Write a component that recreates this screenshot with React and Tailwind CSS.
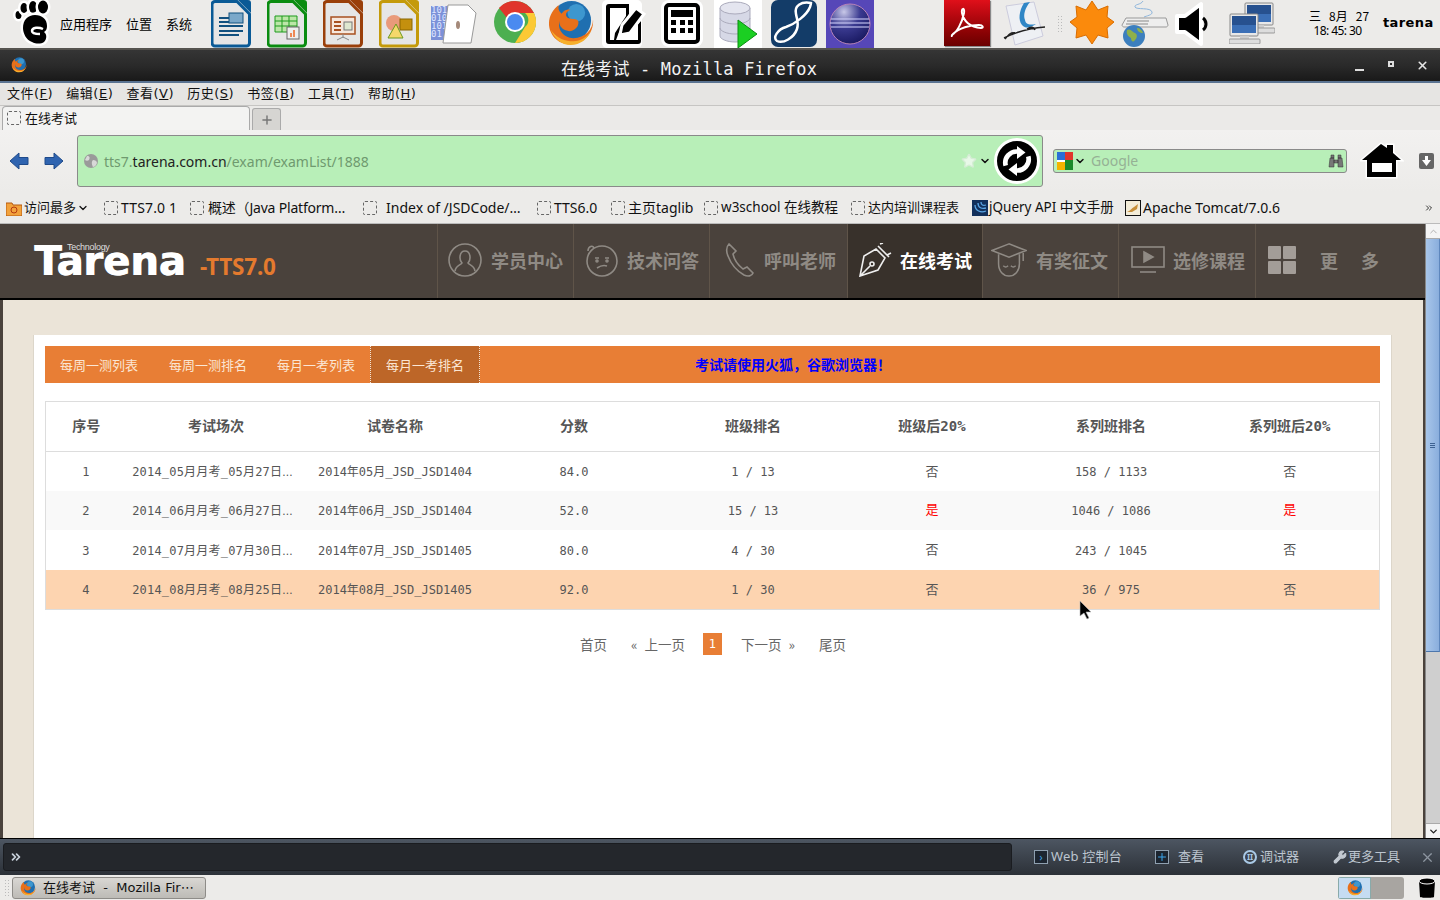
import React from "react";
import { Star, ChevronDown, ChevronsRight, Plus, X, Wrench } from "lucide-react";

const Foot = () => (
  <svg width="38" height="46" viewBox="0 0 38 46" className="ml-[13px] shrink-0">
    <g stroke="#fff" strokeWidth="5" paintOrder="stroke">
      <ellipse cx="5.5" cy="15" rx="3" ry="4" fill="#000" />
      <ellipse cx="11" cy="8" rx="3.5" ry="5" fill="#000" />
      <ellipse cx="20" cy="7" rx="4" ry="6" fill="#000" />
      <ellipse cx="30" cy="7" rx="5" ry="6.5" fill="#000" />
      <path d="M22 15c7 0 12 4 12 11 0 3-1 5-3 6 3 2 3 7 0 10-3 2-8 2-12 0-6-2-9-9-9-14 0-8 5-13 12-13z" fill="#000" />
    </g>
    <path d="M30 29c-4-2-11-2-11 2 0 3 5 3 8 3" stroke="#fff" strokeWidth="2.5" fill="none" />
  </svg>
);

const DocIcon = ({ c, children, ml }) => (
  <svg width="40" height="48" viewBox="0 0 40 48" className={`shrink-0 ${ml}`}>
    <path d="M27 0h10a3 3 0 0 1 3 3v10z" fill={c} />
    <path d="M4 1.5h22L38.5 14v29a3 3 0 0 1-3 3H4a3 3 0 0 1-3-3V4.500a3 3 0 0 1 3-3z" fill="#e6e6e6" stroke={c} strokeWidth="3" />
    {children}
  </svg>
);

const FirefoxIcon = ({ s = 47, className = "" }) => (
  <svg width={s} height={s} viewBox="0 0 48 48" className={`shrink-0 ${className}`}>
    <circle cx="25" cy="21" r="20" fill="#1f6fb0" />
    <circle cx="30" cy="13" r="9" fill="#3d97cf" />
    <path d="M12 5c-1 5 1 7 3 9 4-6 9-4 9-4-7 3-5 8-1 9 5 1 8 0 9 3 1 6-6 12-13 9-5-2-7-6-6-10-3 9 4 18 14 18 12 0 20-9 20-19 1 11-6 23-20 25C12 47 2 36 2 24 2 15 7 9 12 5z" fill="#e8701a" />
    <path d="M4 30c3 9 11 16 20 16 10 0 18-6 21-15-4 8-12 12-21 11C15 41 8 37 4 30z" fill="#f7b02c" />
  </svg>
);

const Chrome = () => (
  <svg width="42" height="44" viewBox="0 0 42 42" className="ml-[15px] shrink-0">
    <circle cx="21" cy="21" r="21" fill="#4caf50" />
    <path d="M21 0a21 21 0 0 1 19 12H21a9 9 0 0 0-8 5L5 7A21 21 0 0 1 21 0z" fill="#e0352b" />
    <path d="M40 12a21 21 0 0 1-19 30l10-16a9 9 0 0 0 0-14z" fill="#fcc934" />
    <circle cx="21" cy="21" r="10" fill="#fff" />
    <circle cx="21" cy="21" r="8" fill="#4a8af0" />
  </svg>
);

const Binary = () => (
  <div className="relative w-[48px] h-[48px] ml-[12px] shrink-0">
    <div className="absolute left-0 top-[6px] w-[22px] h-[34px] bg-[#7c91d8] text-[#dfe6ff] text-[9px] leading-[8px] font-['DejaVu_Sans_Mono',monospace] overflow-hidden">101<br />010<br />101<br />01</div>
    <svg width="36" height="40" viewBox="0 0 36 40" className="absolute left-[11px] top-[4px]">
      <path d="M6 1h20l8 8-5 30H1z" fill="#fff" stroke="#999" />
      <ellipse cx="16" cy="21" rx="2" ry="4" fill="#a58a7a" />
    </svg>
  </div>
);

const EditIcon = () => (
  <svg width="48" height="48" viewBox="0 0 48 48" className="ml-[8px] shrink-0">
    <rect x="0" y="0" width="40" height="48" rx="5" fill="#fff" />
    <path d="M7 4h20v10L17 32l-3 8h22V24l3-3v20a3 3 0 0 1-3 3H7a3 3 0 0 1-3-3V7a3 3 0 0 1 3-3z" fill="#000" />
    <path d="M8 8h16v8L13 33l-1 7H8z" fill="#fff" />
    <path d="M34 8l8 6-14 19-10 2 2-10z" fill="#000" stroke="#fff" strokeWidth="3" />
  </svg>
);

const Calc = () => (
  <div className="ml-[11px] w-[42px] h-[47px] bg-white rounded-[8px] shrink-0 flex items-center justify-center">
    <div className="w-[36px] h-[41px] border-[4px] border-black rounded-[5px] bg-white p-[3px] flex flex-col gap-[3px]">
      <div className="h-[7px] bg-black" />
      <div className="grid grid-cols-3 gap-x-[4px] gap-y-[3px]">
        {[...Array(6)].map((_, i) => <div key={i} className="h-[5px] w-[5px] bg-black" />)}
      </div>
    </div>
  </div>
);

const DbIcon = () => (
  <svg width="48" height="48" viewBox="0 0 48 48" className="ml-[11px] shrink-0 bg-white">
    <path d="M6 8v28c0 3 7 6 15 6s15-3 15-6V8z" fill="#d6d8e6" stroke="#aab" />
    <ellipse cx="21" cy="8" rx="15" ry="6" fill="#e4e5ef" stroke="#aab" />
    <path d="M6 18c0 3 7 6 15 6s15-3 15-6M6 28c0 3 7 6 15 6s15-3 15-6" fill="none" stroke="#aab" />
    <path d="M24 20l19 14-19 14z" fill="#1bcf22" stroke="#0a8f10" />
  </svg>
);

const Solaris = () => (
  <div className="ml-[9px] w-[46px] h-[47px] rounded-[7px] bg-[#133c68] shrink-0 overflow-hidden">
    <svg width="46" height="47" viewBox="0 0 46 47">
      <path d="M40 3C30 1 23 6 25 14c1 6 3 9 1 15-3 9-14 15-20 12-5-3 1-12 9-14 9-3 21-12 24-20 1-3 1-4 1-4z" fill="none" stroke="#fff" strokeWidth="2.5" />
    </svg>
  </div>
);

const Eclipse = () => (
  <div className="ml-[9px] w-[48px] h-[48px] bg-[#5647b8] shrink-0 flex items-center justify-center">
    <svg width="42" height="42" viewBox="0 0 42 42">
      <defs>
        <radialGradient id="ecl" cx="0.35" cy="0.2" r="0.9">
          <stop offset="0" stopColor="#c8c8e8" />
          <stop offset="0.45" stopColor="#3a3a90" />
          <stop offset="1" stopColor="#14145a" />
        </radialGradient>
      </defs>
      <circle cx="21" cy="21" r="20" fill="url(#ecl)" stroke="#b884b8" />
      <path d="M2 16h38M1 20h40M2 24h38" stroke="#d8d8ff" strokeWidth="1" />
    </svg>
  </div>
);

const Pdf = () => (
  <div className="ml-[70px] w-[46px] h-[46px] bg-gradient-to-b from-[#e0101a] to-[#6a0000] shadow-[1px_1px_1px_#888] shrink-0 flex items-center justify-center">
    <svg width="36" height="36" viewBox="0 0 36 36">
      <path d="M3 30c5-3 10-12 12-22 1-6-3-5-2 0 2 9 8 14 19 15 3 0 2-3-2-3-9 0-20 3-26 9-2 2-1 3-1 1z" fill="none" stroke="#fff" strokeWidth="2" />
    </svg>
  </div>
);

const Glasses = () => (
  <svg width="45" height="48" viewBox="0 0 45 48" className="ml-[12px] shrink-0">
    <path d="M4 6l28-4 9 34-28 9z" fill="#eef0f4" stroke="#ccd" />
    <path d="M22 3c-5 8-6 17-2 22 4 4 8 3 14-1-6 1-10 1-11-4-2-5 0-12 5-18z" fill="#2f86c6" />
    <path d="M2 38c12-6 26-10 41-11M3 39c4-5 6-7 10-6M25 29c4-3 7-2 8 1" stroke="#222" strokeWidth="1.5" fill="none" />
  </svg>
);

const Sun = () => (
  <svg width="44" height="44" viewBox="0 0 44 44" className="ml-[8px] shrink-0">
    <path d="M22 1l6 9 10-4-1 11 7 5-7 6 1 10-10-3-6 9-6-9-10 3 1-10-7-6 7-5-1-11 10 4z" fill="#fb8a0c" stroke="#d96d00" />
  </svg>
);

const Keyboard = () => (
  <svg width="48" height="48" viewBox="0 0 48 48" className="ml-[7px] shrink-0">
    <path d="M22 1c-2 4-9 3-8 6 1 3 16 0 17 5 1 3-6 4-8 5" fill="none" stroke="#8fb6dc" />
    <path d="M5 18h40l2 7c0 1-1 2-2 2H3c-1 0-2-1-2-2z" fill="#eee" stroke="#999" />
    <path d="M6 21h22M5 24h22" stroke="#bbb" strokeWidth="2" />
    <circle cx="13" cy="36" r="11" fill="#3c7fbe" />
    <path d="M6 30c4-2 5 2 8 3 2 1 3 4 0 7-2 3-4 1-4-2-3-2-5-4-4-8zM16 28c3 0 5 2 6 5-3 0-6-2-6-5z" fill="#8eb04a" />
  </svg>
);

const Speaker = () => (
  <svg width="34" height="48" viewBox="0 0 34 48" className="ml-[6px] shrink-0">
    <path d="M2 16h8L26 4v40L10 32H2z" fill="#000" stroke="#fff" strokeWidth="4" strokeLinejoin="round" />
    <path d="M28 18c4 3 4 9 0 12" fill="none" stroke="#000" strokeWidth="3" />
  </svg>
);

const Monitor = ({ x, y }) => (
  <g transform={`translate(${x},${y})`}>
    <rect x="1" y="1" width="28" height="22" rx="1" fill="#e8e8e8" stroke="#888" />
    <rect x="3" y="3" width="24" height="17" fill="#27518f" />
    <path d="M3 12h24v8H3z" fill="#3b6fb6" />
    <rect x="11" y="23" width="9" height="3" fill="#ccc" />
    <rect x="0" y="26" width="31" height="5" rx="1" fill="#ddd" stroke="#999" />
  </g>
);

const Network = () => (
  <svg width="46" height="44" viewBox="0 0 46 44" className="ml-[20px] shrink-0">
    <Monitor x={15} y={2} />
    <Monitor x={0} y={13} />
  </svg>
);

const Panel = () => (
  <div className="h-[48px] bg-[#ecebe9] flex items-start font-['Noto_Sans_CJK_SC',sans-serif] text-[13px] text-black">
    <Foot />
    <div className="w-[148px] shrink-0 flex items-center h-[48px] gap-[14px] pl-[9px]">
      <span>应用程序</span><span>位置</span><span>系统</span>
    </div>
    <DocIcon c="#0a5a96" ml="ml-[12px]">
      <path d="M8 18h12M8 22h10M8 26h24M8 31h24M8 35h20" stroke="#11507f" strokeWidth="2" />
      <rect x="18" y="13" width="14" height="10" fill="#7ba8c9" stroke="#11507f" />
    </DocIcon>
    <DocIcon c="#0a8c10" ml="ml-[16px]">
      <path d="M8 16h22v16H8zM8 21h22M8 26h22M15 16v16M22 16v16" fill="#bce6a8" stroke="#1c9b1c" />
      <rect x="20" y="27" width="12" height="12" fill="#eee" stroke="#666" />
      <path d="M23 37v-4h2v4zM26 37v-7h2v7z" fill="#e85" />
    </DocIcon>
    <DocIcon c="#9a3f0a" ml="ml-[16px]">
      <rect x="8" y="17" width="24" height="17" fill="#f6e7dc" stroke="#a85020" strokeWidth="1.5" />
      <path d="M11 22h7M11 26h7M11 30h7" stroke="#a85020" strokeWidth="2" />
      <rect x="21" y="22" width="8" height="8" fill="#dfe8d0" stroke="#777" />
      <path d="M20 34v4M14 40l6-3 6 3" stroke="#888" fill="none" />
    </DocIcon>
    <DocIcon c="#c49a0a" ml="ml-[16px]">
      <circle cx="15" cy="23" r="8" fill="#e99a7a" />
      <rect x="21" y="19" width="12" height="11" fill="#c4900e" stroke="#8a6600" />
      <path d="M17 24l-8 14h15z" fill="#f5d86a" stroke="#6a9a20" />
    </DocIcon>
    <Binary />
    <Chrome />
    <FirefoxIcon className="ml-[11px]" />
    <EditIcon />
    <Calc />
    <DbIcon />
    <Solaris />
    <Eclipse />
    <Pdf />
    <Glasses />
    <div className="ml-[10px] mt-[15px] w-[5px] h-[18px] shrink-0 bg-[radial-gradient(#bbb_1px,transparent_1px)] bg-[length:3px_3px]" />
    <Sun />
    <Keyboard />
    <Speaker />
    <Network />
    <div className="ml-[34px] w-[57px] shrink-0 pt-[7px] text-[12px] text-center whitespace-pre flex flex-col">
      <div className="h-[18px] leading-[18px]">{"三   8月   27"}</div>
      <div className="-mt-[1px] h-[14px] leading-[14px] font-['Noto_Sans',sans-serif] tracking-[-0.6px]">{"18: 45: 30"}</div>
    </div>
    <div className="ml-[17px] pt-[14px] text-[13px] leading-[18px] font-bold font-['DejaVu_Sans',sans-serif] tracking-[0.4px]">tarena</div>
  </div>
);

const TitleBar = () => (
  <div className="relative h-[35px] bg-gradient-to-b from-[#353535] via-[#2a2a2a] to-[#191919] border-t-2 border-[#55534f] border-b-2 border-b-[#5a7391] flex items-center justify-center text-[#f2f2f2] text-[17px] font-['DejaVu_Sans_Mono','Noto_Sans_CJK_SC',monospace]">
    <FirefoxIcon s={16} className="absolute left-[11px] top-[7px]" />
    <span className="-ml-[62px] mt-[9px] tracking-[0.18px]">在线考试 - Mozilla Firefox</span>
    <div className="absolute left-[1355px] top-[19px] w-[9px] h-[2px] bg-[#ddd]" />
    <div className="absolute left-[1388px] top-[11px] w-[6px] h-[6px] border-2 border-[#ddd]" />
    <X size={13} strokeWidth={3} color="#e5e5e5" className="absolute left-[1416px] top-[9px]" />
  </div>
);

const menus = [["文件", "F"], ["编辑", "E"], ["查看", "V"], ["历史", "S"], ["书签", "B"], ["工具", "T"], ["帮助", "H"]];
const MenuBar = () => (
  <div className="h-[22px] bg-[#e6e5e3] flex items-center gap-[13.200px] pl-[7px] text-[13px] tracking-[0.5px] text-[#111] font-['DejaVu_Sans','Noto_Sans_CJK_SC',sans-serif]">
    {menus.map(([a, b]) => (
      <span key={a} className="whitespace-nowrap">{a}(<span className="underline">{b}</span>)</span>
    ))}
  </div>
);

const Ph = ({ className = "" }) => (
  <span className={`inline-block shrink-0 w-[14px] h-[14px] rounded-[2px] border border-dashed border-[#666] ${className}`} />
);

const TabBar = () => (
  <div className="h-[25px] bg-[#ebeae8] border-t border-[#c6c5c3] flex items-end pl-[2px] font-['Noto_Sans_CJK_SC',sans-serif] text-[13px] text-[#111]">
    <div className="w-[248px] h-[24px] bg-[#f3f3f2] border border-b-0 border-[#aaa] rounded-t-[4px] flex items-center pl-[4px] pb-[2px] gap-[4px]">
      <Ph /><span>在线考试</span>
    </div>
    <div className="ml-[2px] w-[29px] h-[22px] bg-[#d6d5d2] border border-b-0 border-[#aaa] rounded-t-[3px] flex items-center justify-center">
      <Plus size={14} strokeWidth={2.5} color="#777" />
    </div>
  </div>
);

const Arrow = ({ dir }) => (
  <svg width="20" height="20" viewBox="0 0 20 20" className={dir === "l" ? "ml-[9px] shrink-0" : "ml-[15px] shrink-0"}>
    <path d={dir === "l" ? "M1 10l9-8v4.500h9v7h-9V18z" : "M19 10l-9-8v4.500H1v7h9V18z"} fill="#2f64b0" stroke="#1f4a8a" />
  </svg>
);

const NavBar = () => (
  <div className="h-[62px] bg-gradient-to-b from-[#f2f1f0] to-[#ecebe9] flex items-center text-[14px] font-['Noto_Sans',sans-serif]">
    <Arrow dir="l" />
    <Arrow dir="r" />
    <div className="ml-[13px] w-[966px] h-[52px] bg-[#b8efb8] border border-[#8a8a8a] rounded-[3px] flex items-center pl-[6px] relative">
      <svg width="14" height="14" viewBox="0 0 14 14" className="shrink-0">
        <circle cx="7" cy="7" r="7" fill="#9a9a9a" />
        <path d="M3 2c3 0 3 2 2 4-1 1-3 1-4 0zM9 6c2 0 4 1 4 3-1 3-3 4-4 4-1-2-2-5 0-7z" fill="#d8d8d8" />
      </svg>
      <span className="ml-[6px] text-[#6f9a6f]">tts7.<span className="text-[#222]">tarena.com.cn</span>/exam/examList/1888</span>
      <Star size={16} fill="#e8f8e8" color="#d5edd5" className="absolute left-[883px] top-[17px]" />
      <ChevronDown size={12} strokeWidth={3} color="#111" className="absolute left-[901px] top-[19px]" />
      <div className="absolute left-[916px] top-[2px] w-[46px] h-[46px] rounded-full bg-black border-[3px] border-white flex items-center justify-center">
        <svg width="32" height="32" viewBox="0 0 34 34">
          <path d="M5 22a12 12 0 0 1 13-15" fill="none" stroke="#fff" strokeWidth="5" />
          <path d="M17 1v14l9-7z" fill="#fff" />
          <path d="M29 12a12 12 0 0 1-13 15" fill="none" stroke="#fff" strokeWidth="5" />
          <path d="M17 33V19l-9 7z" fill="#fff" />
        </svg>
      </div>
    </div>
    <div className="ml-[10px] w-[294px] h-[24px] bg-[#b8efb8] border border-[#8a8a8a] rounded-[3px] flex items-center pl-[3px] relative">
      <svg width="16" height="18" viewBox="0 0 16 18" className="shrink-0">
        <rect width="16" height="18" fill="#fff" />
        <path d="M8 0h8v8H8z" fill="#e0352b" /><path d="M0 8h8V0H0z" fill="#2a6fd6" />
        <path d="M8 8h8v10H8z" fill="#1a8a2a" /><path d="M0 10h8v8H0z" fill="#f4b400" />
      </svg>
      <ChevronDown size={12} strokeWidth={3} color="#111" className="ml-[1px]" />
      <span className="ml-[5px] -mt-[1px] text-[#95b195]">Google</span>
      <svg width="16" height="14" viewBox="0 0 16 14" className="absolute right-[2px] top-[4px]">
        <path d="M2 4h4v9H1zM10 4h4l1 9h-5zM6 6h4v3H6zM3 1h3v3H3zM10 1h3v3h-3z" fill="#777" stroke="#333" strokeWidth="0.5" />
      </svg>
    </div>
    <svg width="44" height="40" viewBox="0 0 44 40" className="ml-[13px] shrink-0">
      <path d="M21 3L2 19h5v17h29V19h5l-8-7V4h-6v3z" fill="#000" stroke="#fff" strokeWidth="3" paintOrder="stroke" />
      <rect x="12" y="22" width="20" height="9" fill="#fff" />
    </svg>
    <div className="ml-[15px] w-[15px] h-[16px] rounded-[2px] bg-[#666] flex items-center justify-center">
      <svg width="9" height="10" viewBox="0 0 9 10"><path d="M3 0h3v4h3L4.500 10 0 4h3z" fill="#fff" /></svg>
    </div>
  </div>
);

const bookmarks = [
  ["ml-[15px] w-[73px]", "TTS7.0 1", "tracking-[0.15px]"],
  ["ml-[13px] w-[158px]", "概述（Java Platform…", "ml-[4px] [text-spacing-trim:space-all] tracking-[-0.2px]"],
  ["ml-[15px] w-[157px]", "Index of /JSDCode/…", "ml-[9px]"],
  ["ml-[17px] w-[61px]", "TTS6.0", ""],
  ["ml-[13px] w-[80px]", "主页taglib", ""],
  ["ml-[13px] w-[134px]", "w3school 在线教程", "text-[13.500px]"],
  ["ml-[13px] w-[108px]", "达内培训课程表", "text-[13px] ml-[1px]"],
];
const Bookmarks = () => (
  <div className="h-[31px] bg-[#ecebe9] flex items-center pl-[6px] text-[14px] text-[#111] whitespace-nowrap font-['Noto_Sans','Noto_Sans_CJK_SC',sans-serif]">
    <svg width="16" height="16" viewBox="0 0 16 16" className="shrink-0"><path d="M0 3h6l1 2h9v11H0z" fill="#f2a23c" stroke="#b5590f" /><circle cx="8" cy="10" r="3" fill="none" stroke="#b5390f" /></svg>
    <span className="ml-[2px] text-[13px]">访问最多</span>
    <ChevronDown size={12} strokeWidth={2.5} className="ml-[1px]" />
    {bookmarks.map(([w, t, m]) => (
      <div key={t} className={`flex items-center shrink-0 ${w}`}>
        <Ph />
        <span className={`ml-[3px] ${m}`}>{t}</span>
      </div>
    ))}
    <div className="w-[16px] h-[16px] bg-[#12305c] shrink-0 flex items-center justify-center ml-[13px]">
      <svg width="14" height="14" viewBox="0 0 14 14"><path d="M2 4c0 6 6 8 11 6M5 2c0 5 4 6 8 5M8 1c0 3 2 4 5 3" fill="none" stroke="#5aa6e6" strokeWidth="1.3" /></svg>
    </div>
    <span className="ml-[1px] w-[124px] shrink-0 text-[13.500px]">jQuery API 中文手册</span>
    <svg width="16" height="16" viewBox="0 0 16 16" className="ml-[12px] shrink-0"><rect x="0.500" y="0.500" width="15" height="15" fill="#f3ecd8" stroke="#111" /><path d="M2 12c3-1 5-4 7-5l4-3-1 5-5 3z" fill="#c78f3a" /></svg>
    <span className="ml-[2px]">Apache Tomcat/7.0.6</span>
    <ChevronsRight size={10} className="ml-[144px]" />
  </div>
);

const stroke = { fill: "none", stroke: "#8f8a84", strokeWidth: 1.6 };
const navItems = [
  { t: "学员中心", w: "w-[136px]", gap: "ml-[9px]", tm: "ml-[8px]", icon: <svg width="36" height="34" viewBox="0 0 36 34" {...stroke}><circle cx="18" cy="17" r="16" /><path d="M8 28c1-6 6-6 7-8-3-3-3-12 3-12s6 9 3 12c1 2 6 2 7 8" /></svg> },
  { t: "技术问答", w: "w-[136px]", gap: "ml-[10px]", tm: "ml-[7px]", icon: <svg width="36" height="34" viewBox="0 0 36 34" {...stroke}><circle cx="18" cy="18" r="15" /><path d="M4 8c0-5 5-6 6-3M11 15h4M21 15h4M13 25c3-2 7-3 10-2" /><circle cx="13" cy="18" r="1" /><circle cx="23" cy="18" r="1" /></svg> },
  { t: "呼叫老师", w: "w-[138px]", gap: "ml-[13px]", tm: "ml-[5px]", icon: <svg width="32" height="34" viewBox="0 0 32 34" {...stroke}><path d="M4 1c-3 3-3 7-1 12 3 8 9 15 16 19 4 2 8 1 9-2l-6-6-4 2C13 22 9 16 8 11l3-3z" /></svg> },
  { t: "在线考试", w: "w-[135px]", gap: "ml-[9px]", tm: "ml-[7px]", active: true, icon: <svg width="34" height="34" viewBox="0 0 34 34" fill="none" stroke="#eee" strokeWidth="1.6"><path d="M2 33l4-20 12-7 9 9-7 12zM2 33l10-10M20 3l11 11M22 1l3-1M29 12l4-2" /><circle cx="14" cy="21" r="2" /></svg> },
  { t: "有奖征文", w: "w-[136px]", gap: "ml-[8px]", tm: "ml-[9px]", icon: <svg width="38" height="36" viewBox="0 0 38 36" {...stroke}><path d="M19 1L1 8l18 7 18-7zM8 12v10c0 8 5 13 11 13s11-5 11-13V12M34 9v10" /><path d="M13 24c2 2 3 2 5 0M21 24c2 2 3 2 5 0" /></svg> },
  { t: "选修课程", w: "w-[137px]", gap: "ml-[11px]", tm: "ml-[7px]", icon: <svg width="34" height="28" viewBox="0 0 34 28" {...stroke}><rect x="1" y="1" width="32" height="20" /><path d="M13 6l9 5-9 5z" fill="#8f8a84" /><path d="M9 26h16" /></svg> },
];

const Header = () => (
  <div className="h-[76px] bg-[#4a423c] border-b-2 border-black flex items-stretch">
    <div className="w-[437px] shrink-0 pl-[34px] pt-[13px] relative">
      <span className="absolute left-[67px] top-[19px] text-[9px] leading-[9px] text-[#ddd] tracking-[-0.3px] font-['Liberation_Sans',sans-serif]">Technology</span>
      <div className="flex items-baseline">
        <span className="w-[166px] shrink-0 text-[40px] leading-[48px] font-bold text-white [text-shadow:1px_0_0_#fff] font-['DejaVu_Sans',sans-serif]">Tarena</span>
        <span className="text-[22.500px] font-bold text-[#e47a2e] font-['Noto_Sans',sans-serif] tracking-[-0.2px]">-TTS7.0</span>
      </div>
    </div>
    {navItems.map((n) => (
      <div key={n.t} className={`${n.w} shrink-0 flex items-center border-l border-[#5f5449] ${n.active ? "bg-[#38312b]" : ""}`}>
        <div className={`${n.gap} w-[36px] h-[36px] -mt-[2px] flex items-center justify-center shrink-0`}>{n.icon}</div>
        <span className={`${n.tm} -mt-[2px] text-[18px] font-bold font-['Noto_Sans_CJK_SC',sans-serif] ${n.active ? "text-white" : "text-[#8f8a84]"}`}>{n.t}</span>
      </div>
    ))}
    <div className="flex-1 flex items-center border-l border-[#5f5449] text-[18px] font-bold text-[#8f8a84] font-['Noto_Sans_CJK_SC',sans-serif]">
      <div className="ml-[12px] -mt-[2px] w-[28px] h-[28px] grid grid-cols-2 gap-[2px]">
        {[0, 1, 2, 3].map((i) => <div key={i} className="bg-[#a39d98] rounded-[1px]" />)}
      </div>
      <span className="ml-[24px] -mt-[2px]">更</span>
      <span className="ml-[23px] -mt-[2px]">多</span>
    </div>
  </div>
);

const rows = [
  { n: 1, a: "2014_05月月考_05月27日", b: "2014年05月_JSD_JSD1404", s: "84.0", c: "1 / 13", d: "否", e: "158 / 1133", f: "否", h: "h-[39px]" },
  { n: 2, a: "2014_06月月考_06月27日", b: "2014年06月_JSD_JSD1404", s: "52.0", c: "15 / 13", d: "是", e: "1046 / 1086", f: "是", h: "h-[39px]", bg: "bg-[#f9f9f9]" },
  { n: 3, a: "2014_07月月考_07月30日", b: "2014年07月_JSD_JSD1405", s: "80.0", c: "4 / 30", d: "否", e: "243 / 1045", f: "否", h: "h-[40px]" },
  { n: 4, a: "2014_08月月考_08月25日", b: "2014年08月_JSD_JSD1405", s: "92.0", c: "1 / 30", d: "否", e: "36 / 975", f: "否", h: "h-[40px]", bg: "bg-[#fdd4b0]" },
];
const yn = (v) => <td className={`text-[13px] ${v === "是" ? "text-[#f00]" : ""}`}>{v}</td>;

const Table = () => (
  <table className="mt-[18px] w-full table-fixed border border-[#ddd] border-collapse text-center text-[12px] text-[#555] font-['DejaVu_Sans_Mono','Noto_Sans_CJK_SC',monospace]">
    <colgroup><col className="w-[81px]" /></colgroup>
    <thead>
      <tr className="h-[50px] border-b border-[#ddd] text-[14px] text-[#555] font-bold">
        {["序号", "考试场次", "试卷名称", "分数", "班级排名", "班级后20%", "系列班排名", "系列班后20%"].map((h) => <th key={h} className="pb-[1px]">{h}</th>)}
      </tr>
    </thead>
    <tbody>
      {rows.map((r) => (
        <tr key={r.n} className={`${r.h} ${r.bg || ""}`}>
          <td className="pt-[2px] pr-[1px]">{r.n}</td>
          <td className="pt-[2px] pr-[7px] whitespace-nowrap tracking-[0.2px]">{r.a}<span className="font-['Liberation_Sans',sans-serif]">...</span></td>
          <td className="pt-[2px] whitespace-nowrap">{r.b}</td>
          <td className="pt-[2px]">{r.s}</td>
          <td className="pt-[2px]">{r.c}</td>
          {yn(r.d)}
          <td className="pt-[2px]">{r.e}</td>
          {yn(r.f)}
        </tr>
      ))}
    </tbody>
  </table>
);

const Pager = () => (
  <div className="mt-[23px] h-[22px] flex items-center text-[13.500px] text-[#666] pl-[535px] whitespace-nowrap font-['Noto_Sans_CJK_SC',sans-serif]">
    <span>首页</span>
    <span className="ml-[24px]">«</span>
    <span className="ml-[7px]">上一页</span>
    <span className="ml-[18px] w-[19px] h-[22px] bg-[#e87e35] text-white flex items-center justify-center font-['DejaVu_Sans_Mono',monospace] text-[12px]">1</span>
    <span className="ml-[19px]">下一页</span>
    <span className="ml-[7px]">»</span>
    <span className="ml-[24px]">尾页</span>
  </div>
);

const tabs = ["每周一测列表", "每周一测排名", "每月一考列表"];
const Card = () => (
  <div className="ml-[31px] mt-[35px] w-[1357px] flex-1 bg-white px-[11px] pt-[11px] shadow-[-1px_0_0_#dcd6ca,1px_0_0_#dcd6ca]">
    <div className="h-[37px] bg-[#e87e35] flex items-center text-[13px] font-['Noto_Sans_CJK_SC',sans-serif]">
      {tabs.map((t, i) => (
        <div key={t} className={`pl-[15px] whitespace-nowrap text-[#fbe6d4] ${i === 0 ? "w-[109px]" : "w-[108px]"}`}>{t}</div>
      ))}
      <div className="w-[110px] h-[37px] bg-[#bd6628] border-x border-dotted border-[#f5e6d8] text-[#fbe6d4] flex items-center pl-[15px]">每月一考排名</div>
      <div className="ml-[215px] text-[14px] font-bold text-[#0000ff] [text-spacing-trim:space-all]">考试请使用火狐，谷歌浏览器！</div>
    </div>
    <Table />
    <Pager />
  </div>
);

const Scrollbar = () => (
  <div className="w-[15px] shrink-0 bg-[#cfcfcf] border-l border-[#888] flex flex-col">
    <div className="h-[15px] bg-[#f4f4f4] flex items-center justify-center border-b border-[#aaa] text-[#aaa]">
      <ChevronDown size={11} className="rotate-180" />
    </div>
    <div className="h-[413px] bg-gradient-to-r from-[#a8c6ea] to-[#8aaedd] border-b border-[#4d77ad] border-r border-r-[#5e87bd] flex flex-col items-center justify-center gap-[1px]">
      <div className="w-[5px] h-[1px] bg-[#3d6292]" />
      <div className="w-[5px] h-[1px] bg-[#3d6292]" />
      <div className="w-[5px] h-[1px] bg-[#3d6292]" />
    </div>
    <div className="flex-1" />
    <div className="h-[15px] bg-[#f4f4f4] flex items-center justify-center border-t border-[#aaa] text-[#222]">
      <ChevronDown size={11} strokeWidth={3} />
    </div>
  </div>
);

const Page = () => (
  <div className="h-[615px] flex bg-[#4a423c] border-t border-[#bbb]">
    <div className="flex-1 min-w-0 flex flex-col">
      <Header />
      <div className="flex-1 mx-[3px] mr-[2px] bg-[#ebe4d8] flex flex-col min-h-0">
        <Card />
      </div>
    </div>
    <Scrollbar />
  </div>
);

const devItems = [
  { t: "Web 控制台", w: "w-[121px]", icon: <span className="w-[14px] h-[14px] bg-[#1c2530] border border-[#8fa0b0] text-[#3ba7ee] text-[10px] leading-[12px] flex items-center justify-center">›</span>, g: "ml-[3px] tracking-[0.2px]" },
  { t: "查看", w: "w-[88px]", icon: <span className="w-[14px] h-[14px] bg-[#1c2530] border border-[#8fa0b0] flex items-center justify-center"><Plus size={12} color="#3ba7ee" /></span>, g: "ml-[9px]" },
  { t: "调试器", w: "w-[90px]", icon: <span className="w-[14px] h-[14px] rounded-full border-2 border-[#a9c9e6] flex items-center justify-center text-[#a9c9e6] text-[8px] leading-[8px] font-bold">II</span>, g: "ml-[3px]" },
  { t: "更多工具", w: "w-[87px]", icon: <Wrench size={14} color="#c3cad2" fill="#c3cad2" />, g: "ml-[1px]" },
];
const DevBar = () => (
  <div className="h-[37px] bg-gradient-to-b from-[#4d5662] to-[#2c3138] border-t border-black flex items-center text-[13px] text-[#bcc5cf] font-['Noto_Sans','Noto_Sans_CJK_SC',sans-serif]">
    <div className="ml-[3px] w-[1009px] h-[28px] bg-[#24272c] border border-[#1a1c20] rounded-[3px] flex items-center pl-[5px]">
      <ChevronsRight size={14} strokeWidth={3} color="#c7d0da" />
    </div>
    <div className="ml-[22px] flex items-center">
      {devItems.map((d) => (
        <div key={d.t} className={`${d.w} shrink-0 flex items-center whitespace-nowrap`}>
          {d.icon}<span className={d.g}>{d.t}</span>
        </div>
      ))}
    </div>
    <X size={15} strokeWidth={2} color="#8d96a0" />
  </div>
);

const TaskBar = () => (
  <div className="h-[25px] bg-[#ecebe9] flex items-center pl-[4px] text-[13px] text-[#111] font-['DejaVu_Sans','Noto_Sans_CJK_SC',sans-serif]">
    <div className="w-[5px] h-[18px] shrink-0 bg-[radial-gradient(#bbb_1px,transparent_1px)] bg-[length:3px_3px]" />
    <div className="ml-[3px] w-[194px] h-[22px] rounded-[3px] bg-gradient-to-b from-[#d9d7d3] to-[#bdbbb6] border border-[#8e8c88] flex items-center pl-[7px] whitespace-pre overflow-hidden">
      <FirefoxIcon s={16} />
      <span className="ml-[7px]">{"在线考试  -  Mozilla Fir⋯"}</span>
    </div>
    <div className="ml-[1132px] w-[66px] h-[22px] rounded-[3px] bg-[#a8a5a1] flex overflow-hidden">
      <div className="w-[33px] h-[22px] bg-[#c5dcf2] border border-[#8aa] flex items-center justify-center"><FirefoxIcon s={16} /></div>
    </div>
    <svg width="18" height="22" viewBox="0 0 18 22" className="ml-[14px] shrink-0">
      <path d="M1 4h16l-1 16c0 1-14 1-14 0z" fill="#000" />
      <ellipse cx="9" cy="4" rx="8" ry="3" fill="#000" stroke="#fff" />
    </svg>
  </div>
);

export default function App() {
  return (
    <div className="relative w-[1440px] h-[900px] overflow-hidden bg-[#ecebe9]">
      <Panel />
      <TitleBar />
      <MenuBar />
      <TabBar />
      <NavBar />
      <Bookmarks />
      <Page />
      <DevBar />
      <TaskBar />
      <svg width="14" height="20" viewBox="0 0 14 20" className="absolute left-[1079px] top-[600px]">
        <path d="M1 1v15l4-3 3 6 2-1-3-6h5z" fill="#000" stroke="#bbb" strokeWidth="0.6" />
      </svg>
    </div>
  );
}
